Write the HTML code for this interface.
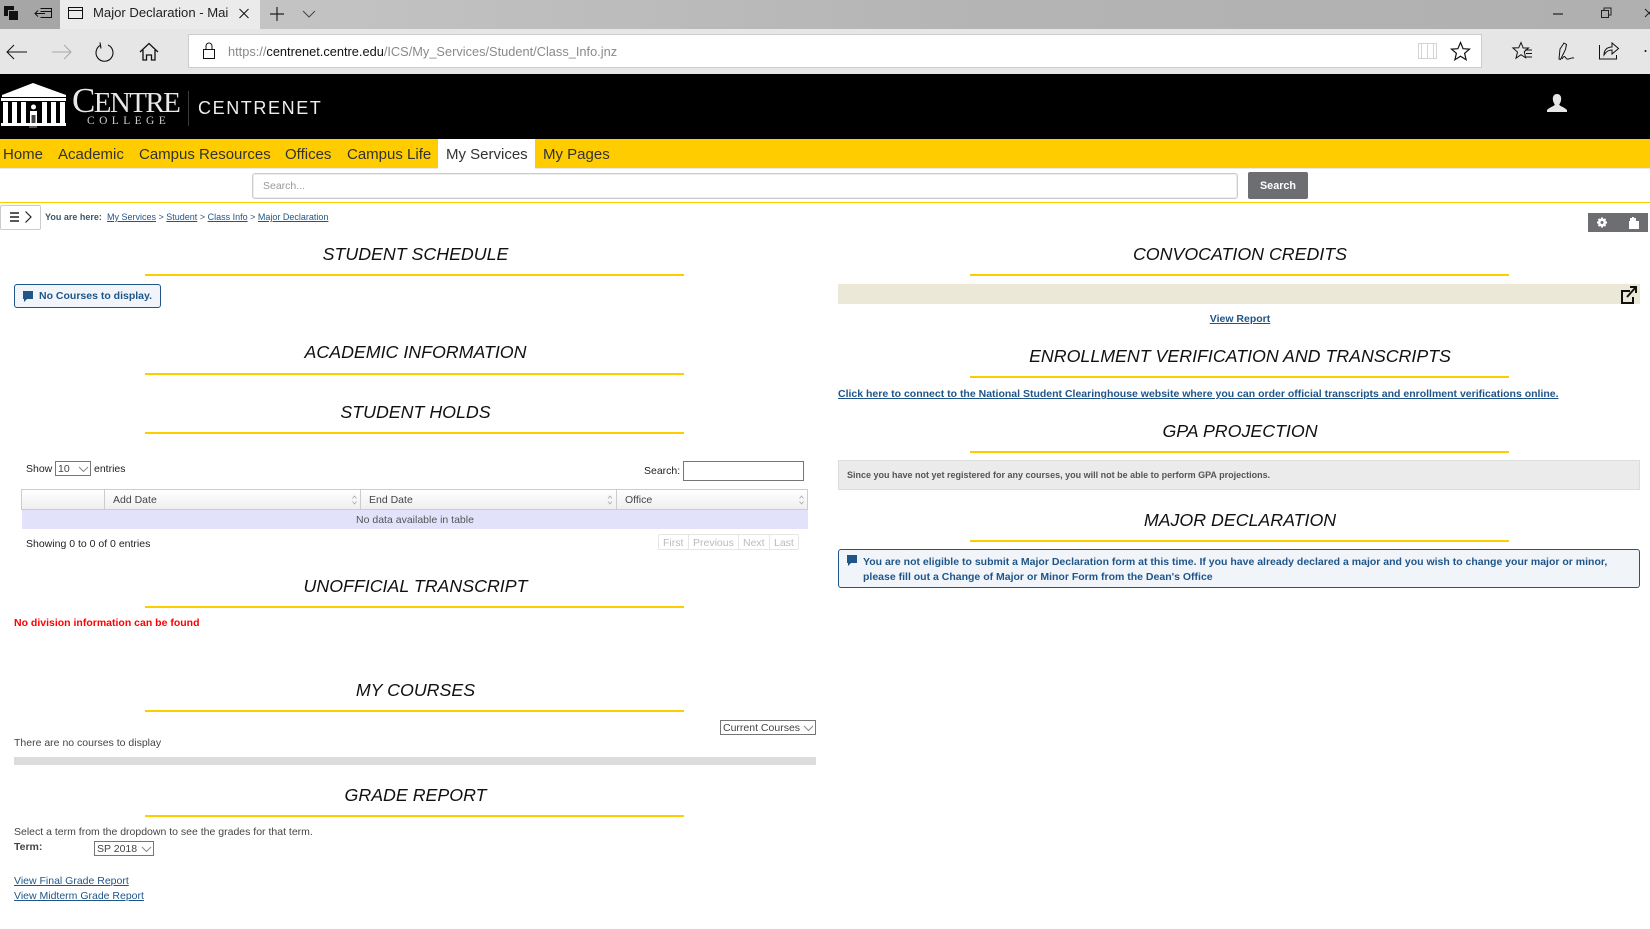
<!DOCTYPE html>
<html lang="en"><head><meta charset="utf-8"><title>Major Declaration</title>
<style>
*{box-sizing:border-box}
html,body{margin:0;padding:0;width:1650px;height:929px;overflow:hidden;background:#fff;font-family:"Liberation Sans",Arial,sans-serif}
.a{position:absolute}
.t{position:absolute;white-space:nowrap;line-height:16px;height:16px}
.h{position:absolute;white-space:nowrap;font-style:italic;font-size:17.800px;line-height:23px;height:24px;color:#111;text-align:center;width:540px}
.l{left:145.500px}.r{left:970px}
.u{position:absolute;height:2px;width:539px;background:#fc0}
.n{font-size:15px;color:#333;top:147px;line-height:16px}
.s{font-size:11px;color:#444}
a{color:#1f5589;text-decoration:underline}
svg{position:absolute;overflow:visible}
.sel{position:absolute;border:1px solid #767676;background:#fff;font-size:11px;color:#444;line-height:13px;padding-left:2px;padding-top:.5px;white-space:nowrap}
</style></head><body>

<!-- browser chrome -->
<div class="a" style="left:0;top:0;width:1650px;height:29px;background:linear-gradient(90deg,#a9a9a9 0,#c4c4c4 15%,#b4b4b4 60%,#b0b0b0 100%)"></div>
<div class="a" style="left:0;top:0;width:60px;height:29px;background:#a6a6a6"></div>
<div class="a" style="left:60px;top:0;width:200px;height:29px;background:#ebebeb"></div>
<div class="a" style="left:0;top:29px;width:1650px;height:45px;background:#e6e6e6"></div>
<div class="a" style="left:188px;top:34px;width:1294px;height:34px;background:#fff;border:1px solid #ccc"></div>

<svg style="left:0;top:0" width="280" height="74" fill="none" stroke="#111" stroke-width="1">
<path d="M4 6h10v10H4z" fill="#111" stroke="none"/><path d="M8.500 10.500h10v10h-10z" fill="#111" stroke="#a6a6a6"/>
<path d="M40.500 8.500h11v9h-11M40.500 11.500h11M35 13.500h10M38 10.500l-3 3 3 3"/>
<path d="M68.500 7.500h14v11h-14z M68.500 10.500h14"/>
<path d="M239.500 9l9 9M248.500 9l-9 9"/>
<path d="M7 52h20M14 45l-7 7 7 7"/>
<path d="M52 52h19M64 45l7 7-7 7" stroke="#a8a8a8"/>
<path d="M101 45a8.500 8.500 0 1 0 7 0M100 42.500l1 6 " stroke-width="1.100"/>
<path d="M140 52l9-8.500 9 8.500M143 50v10h3.500v-5h5v5h3.500v-10" stroke-width="1.300"/>
<path d="M203.500 49.500h11v9h-11zM206 49v-3a3 3 0 0 1 6 0v3"/>
</svg>
<svg style="left:1400px;top:0" width="250" height="74" fill="none" stroke="#111" stroke-width="1">
<path d="M153 14h10" stroke="#222" stroke-width="1.200"/>
<path d="M201.500 10.500h7v7h-7zM204 10.500v-2.500h7v7h-2.500" stroke="#222"/>
<path d="M245 9l8 8M253 9l-8 8" stroke="#222"/>
<path d="M18.500 43.500h18v15h-18zM27.500 43.500v15M21.500 43.500v15M33.500 43.500v15" stroke="#d4d4d4"/>
<path d="M60.500 42.500l2.600 6.200 6.400.4-4.900 4.200 1.500 6.400-5.600-3.500-5.600 3.500 1.500-6.400-4.900-4.200 6.400-.4z" stroke-width="1.200"/>
<path d="M121 42.500l2.200 5.500h5.300l-4.200 3.700 1.300 6-4.600-3-5 3.500 1.500-6.200-4.600-4 5.800-.2zM125 50h7M126 53.500h6M126 57h6" stroke-width="1"/>
<path d="M159 59l1-10 4-6 2.500 1.500-1 5-5 10zM162 59c3-5 3-1 5 0 2 .8 4-2 7-1" stroke-width="1"/>
<path d="M199.500 45v14h17v-4M204 55c0-5 3-8 8-8v-4l6.500 5.500-6.500 5.500v-4c-3 0-6 1.500-8 5z" stroke-width="1"/>
<circle cx="245.500" cy="51" r="1" fill="#111" stroke="none"/>
</svg>
<div class="t" style="left:93px;top:5px;font-size:13.100px;color:#222;line-height:16px">Major Declaration - Mai</div>
<div class="t" style="left:228px;top:44px;font-size:12.800px;color:#8a8a8a;">https://<span style="color:#111">centrenet.centre.edu</span>/ICS/My_Services/Student/Class_Info.jnz</div>
<svg style="left:262px;top:0" width="60" height="29" fill="none" stroke="#222"><path d="M8 14h14M15 7v14" stroke-width="1.200"/><path d="M41 11l6 6 6-6" stroke="#444"/></svg>

<!-- header -->
<div class="a" style="left:0;top:74px;width:1650px;height:65px;background:#000"></div>
<svg style="left:0;top:80px" width="70" height="50">
<path d="M33 3L2 15v2h64v-2z" fill="#fff"/>
<rect x="1" y="18" width="65" height="3" fill="#fff"/>
<g fill="#fff"><rect x="3" y="22" width="5" height="21"/><rect x="12" y="22" width="5" height="21"/><rect x="21" y="22" width="5" height="21"/><rect x="42" y="22" width="5" height="21"/><rect x="51" y="22" width="5" height="21"/><rect x="60" y="22" width="5" height="21"/><rect x="1" y="43" width="65" height="3"/><rect x="30" y="31" width="7" height="15"/><circle cx="33.500" cy="27" r="2.500"/></g>
<rect x="31.500" y="35" width="4" height="8" fill="#444"/><rect x="29" y="46" width="8" height="2" fill="#555"/>
</svg>
<div class="t" style="left:72px;top:86px;height:30px;line-height:30px;font-family:'Liberation Serif',serif;font-size:24px;color:#e8e8e8;letter-spacing:-1.600px"><span style="font-size:35px">C</span><span style="font-size:29px">ENTRE</span></div>
<div class="t" style="left:87px;top:114px;height:14px;line-height:14px;font-family:'Liberation Serif',serif;font-size:11.500px;color:#ccc;letter-spacing:4.400px">COLLEGE</div>
<div class="a" style="left:188px;top:91px;width:1px;height:35px;background:#3a3a3a"></div>
<div class="t" style="left:198px;top:96px;height:24px;line-height:24px;font-size:18px;color:#eee;letter-spacing:1.600px">CENTRENET</div>
<svg style="left:1546px;top:92px" width="22" height="22"><path d="M11 2c3 0 4.200 2.300 4.200 4.800 0 2.500-1 4.400-2 5.700.5 1.800 5 2.500 7.800 5.500v2H1v-2c2.800-3 7.300-3.700 7.800-5.500-1-1.300-2-3.200-2-5.700C6.800 4.300 8 2 11 2z" fill="#e6e6e6"/></svg>

<!-- nav -->
<div class="a" style="left:0;top:139px;width:1650px;height:29px;background:#fc0"></div>
<div class="a" style="left:0;top:168px;width:1650px;height:1px;background:#e8e8e8"></div>
<div class="a" style="left:438px;top:139px;width:97px;height:30px;background:#fff"></div>
<div class="t n" style="left:3px">Home</div>
<div class="t n" style="left:58px">Academic</div>
<div class="t n" style="left:139px">Campus Resources</div>
<div class="t n" style="left:285px">Offices</div>
<div class="t n" style="left:347px">Campus Life</div>
<div class="t n" style="left:446px">My Services</div>
<div class="t n" style="left:543px">My Pages</div>

<!-- search -->
<div class="a" style="left:252px;top:173px;width:986px;height:26px;border:1px solid #ccc;border-radius:3px;background:#fff;box-shadow:inset 0 0 0 1px #eee"></div>
<div class="t" style="left:263px;top:178px;font-size:10.500px;color:#999">Search...</div>
<div class="a" style="left:1248px;top:172px;width:60px;height:27px;background:#6d6e71;border-radius:2px;color:#fff;font-size:10.800px;font-weight:bold;text-align:center;line-height:28px">Search</div>
<div class="a" style="left:0;top:202px;width:1650px;height:1px;background:#fc0"></div>

<!-- breadcrumb -->
<div class="a" style="left:0;top:205px;width:41px;height:25px;border:1px solid #ccc;border-radius:2px;background:#fff"></div>
<svg style="left:0;top:205px" width="41" height="25" fill="none" stroke="#222"><path d="M10 8h9M10 12h9M10 16h9" stroke-width="1.500"/><path d="M25.500 6.500l5.500 5.500-5.500 5.500" stroke-width="1.200"/></svg>
<div class="t" style="left:45px;top:209px;font-size:9px;font-weight:bold;color:#3f5468">You are here:</div>
<div class="t" style="left:107px;top:209px;font-size:9px;color:#3f5468"><a>My Services</a> &gt; <a>Student</a> &gt; <a>Class Info</a> &gt; <a>Major Declaration</a></div>

<div class="a" style="left:1588px;top:213px;width:60px;height:19px;background:#6d6e71"></div>
<svg style="left:1588px;top:213px" width="60" height="19" fill="#fff"><circle cx="14" cy="9.500" r="4"/><path d="M14 4.500v10M9 9.500h10M10.500 6l7 7M17.500 6l-7 7" stroke="#fff" stroke-width="2"/><circle cx="14" cy="9.500" r="1.500" fill="#6d6e71"/><path d="M41 8h1V5h2V4h2v1h2v3h3v8H41z"/></svg>

<!-- left col -->
<div class="h l" style="top:243px">STUDENT SCHEDULE</div><div class="u" style="left:145px;top:274px"></div>
<div class="a" style="left:14px;top:284px;width:147px;height:24px;border:1px solid #1f5589;border-radius:3px;background:#f1f5fa"></div>
<svg style="left:22px;top:290px" width="12" height="13"><path d="M1 1h10v8H5l-3 3V9H1z" fill="#1f5589"/></svg>
<div class="t" style="left:39px;top:288px;font-size:10.500px;font-weight:bold;color:#1f5589">No Courses to display.</div>

<div class="h l" style="top:341px">ACADEMIC INFORMATION</div><div class="u" style="left:145px;top:373px"></div>
<div class="h l" style="top:401px">STUDENT HOLDS</div><div class="u" style="left:145px;top:432px"></div>

<div class="t s" style="left:26px;top:461px;font-size:10.500px;color:#222">Show</div>
<div class="sel" style="left:55px;top:461px;width:36px;height:15px;font-size:10.500px">10</div>
<svg style="left:79px;top:466px" width="10" height="8" fill="none" stroke="#888"><path d="M0 1l4.500 4.500 4.500-4.500"/></svg>
<div class="t s" style="left:94px;top:461px;font-size:10.500px;color:#222">entries</div>
<div class="t s" style="left:644px;top:463px;font-size:10.500px;color:#222">Search:</div>
<div class="a" style="left:683px;top:461px;width:121px;height:20px;border:1px solid #767676;background:#fff"></div>

<div class="a" style="left:21px;top:489px;width:787px;height:21px;border-top:1px solid #ccc;border-bottom:1px solid #ccc;background:linear-gradient(#fff,#efefef)"></div>
<div class="a" style="left:21px;top:489px;width:1px;height:21px;background:#ccc"></div>
<div class="a" style="left:104px;top:489px;width:1px;height:21px;background:#ccc"></div>
<div class="a" style="left:360px;top:489px;width:1px;height:21px;background:#ccc"></div>
<div class="a" style="left:616px;top:489px;width:1px;height:21px;background:#ccc"></div>
<div class="a" style="left:807px;top:489px;width:1px;height:21px;background:#ccc"></div>
<div class="t s" style="left:113px;top:492px;font-size:10.500px">Add Date</div>
<div class="t s" style="left:369px;top:492px;font-size:10.500px">End Date</div>
<div class="t s" style="left:625px;top:492px;font-size:10.500px">Office</div>
<svg style="left:0;top:489px" width="808" height="21" fill="none" stroke="#aaa" stroke-width=".8"><path d="M352.500 9.500l2-2.500 2 2.500M352.500 12.500l2 2.500 2-2.500M608 9.500l2-2.500 2 2.500M608 12.500l2 2.500 2-2.500M799.500 9.500l2-2.500 2 2.500M799.500 12.500l2 2.500 2-2.500"/></svg>
<div class="a" style="left:22px;top:510px;width:786px;height:19px;background:#e2e3fb"></div>
<div class="t s" style="left:22px;width:786px;top:512px;text-align:center;font-size:10.500px;color:#555">No data available in table</div>
<div class="t s" style="left:26px;top:536px;font-size:10.500px;color:#222">Showing 0 to 0 of 0 entries</div>
<div class="a" style="left:658px;top:534px;width:141px;height:16px;border:1px solid #e6e6e6;border-radius:2px;font-size:10.500px;color:#bbb;line-height:16px">
<span class="a" style="left:4px">First</span><span class="a" style="left:29px;top:0;width:1px;height:14px;background:#e6e6e6"></span><span class="a" style="left:34px">Previous</span><span class="a" style="left:79px;width:1px;height:14px;background:#e6e6e6"></span><span class="a" style="left:84px">Next</span><span class="a" style="left:110px;width:1px;height:14px;background:#e6e6e6"></span><span class="a" style="left:115px">Last</span></div>

<div class="h l" style="top:575px">UNOFFICIAL TRANSCRIPT</div><div class="u" style="left:145px;top:606px"></div>
<div class="t" style="left:14px;top:615px;font-size:10.500px;font-weight:bold;color:#f00">No division information can be found</div>

<div class="h l" style="top:679px">MY COURSES</div><div class="u" style="left:145px;top:710px"></div>
<div class="sel" style="left:720px;top:720px;width:96px;height:15px;font-size:10.500px">Current Courses</div>
<svg style="left:804px;top:725px" width="10" height="8" fill="none" stroke="#888"><path d="M0 1l4.500 4.500 4.500-4.500"/></svg>
<div class="t s" style="left:14px;top:735px;font-size:10.500px">There are no courses to display</div>
<div class="a" style="left:14px;top:757px;width:802px;height:8px;background:#dcdcdc"></div>

<div class="h l" style="top:784px">GRADE REPORT</div><div class="u" style="left:145px;top:815px"></div>
<div class="t s" style="left:14px;top:824px;font-size:10.500px">Select a term from the dropdown to see the grades for that term.</div>
<div class="t s" style="left:14px;top:839px;font-size:10.500px;font-weight:bold">Term:</div>
<div class="sel" style="left:94px;top:841px;width:60px;height:15px;font-size:10.500px">SP 2018</div>
<svg style="left:142px;top:846px" width="10" height="8" fill="none" stroke="#888"><path d="M0 1l4.500 4.500 4.500-4.500"/></svg>
<div class="t" style="left:14px;top:873px;font-size:10.500px"><a>View Final Grade Report</a></div>
<div class="t" style="left:14px;top:888px;font-size:10.500px"><a>View Midterm Grade Report</a></div>

<!-- right col -->
<div class="h r" style="top:243px">CONVOCATION CREDITS</div><div class="u" style="left:970px;top:274px"></div>
<div class="a" style="left:838px;top:284px;width:802px;height:20px;background:#ebe8d8"></div>
<svg style="left:1619px;top:285px" width="20" height="20" fill="none" stroke="#111" stroke-width="2"><path d="M11 6H3v12h11v-6"/><path d="M8 12l9-10M11 2h6v6"/></svg>
<div class="t" style="left:1100px;width:280px;text-align:center;top:311px;font-size:10.500px;font-weight:bold"><a>View Report</a></div>
<div class="h r" style="top:345px">ENROLLMENT VERIFICATION AND TRANSCRIPTS</div><div class="u" style="left:970px;top:376px"></div>
<div class="t" style="left:838px;top:386px;font-size:10.500px;font-weight:bold"><a>Click here to connect to the National Student Clearinghouse website where you can order official transcripts and enrollment verifications online.</a></div>
<div class="h r" style="top:420px">GPA PROJECTION</div><div class="u" style="left:970px;top:451px"></div>
<div class="a" style="left:838px;top:460px;width:802px;height:30px;background:#ebebeb;border:1px solid #ddd"></div>
<div class="t" style="left:847px;top:467px;font-size:9px;font-weight:bold;color:#555">Since you have not yet registered for any courses, you will not be able to perform GPA projections.</div>
<div class="h r" style="top:509px">MAJOR DECLARATION</div><div class="u" style="left:970px;top:540px"></div>
<div class="a" style="left:838px;top:549px;width:802px;height:39px;border:1px solid #1f5589;border-radius:3px;background:#f1f5fa"></div>
<svg style="left:846px;top:554px" width="12" height="13"><path d="M1 1h10v8H5l-3 3V9H1z" fill="#1f5589"/></svg>
<div class="t" style="left:863px;top:554px;font-size:10.500px;font-weight:bold;color:#1f5589">You are not eligible to submit a Major Declaration form at this time. If you have already declared a major and you wish to change your major or minor,</div>
<div class="t" style="left:863px;top:569px;font-size:10.500px;font-weight:bold;color:#1f5589">please fill out a Change of Major or Minor Form from the Dean's Office</div>
</body></html>
